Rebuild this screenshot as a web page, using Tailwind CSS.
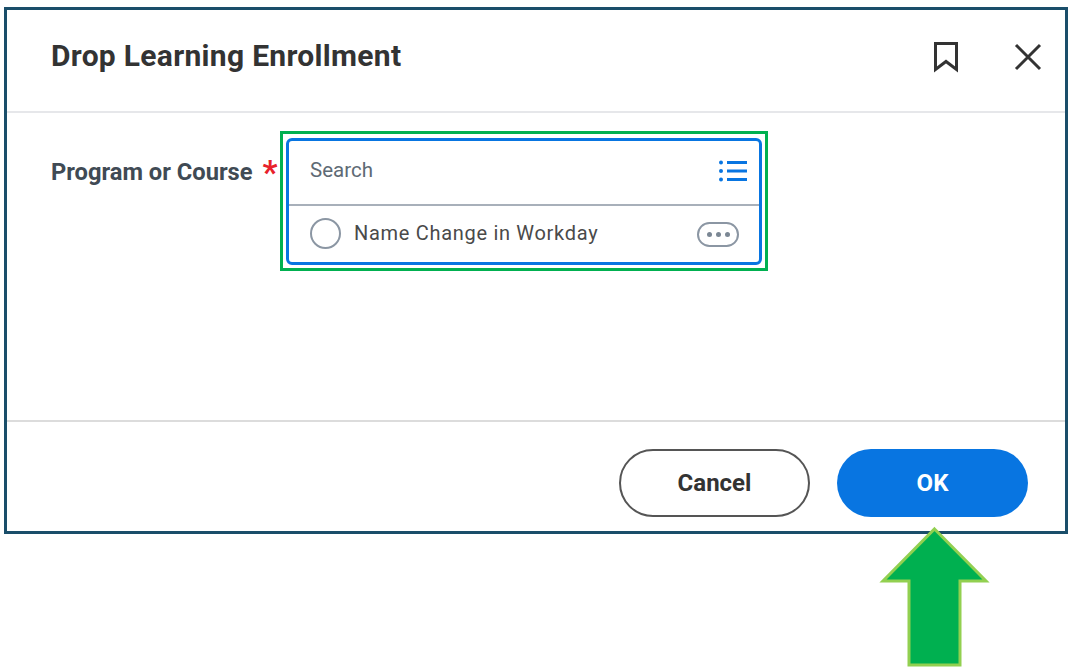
<!DOCTYPE html>
<html lang="en">
<head>
  <meta charset="UTF-8">
  <title>Drop Learning Enrollment</title>
  <script src="https://cdn.jsdelivr.net/npm/@tailwindcss/browser@4"></script>
</head>
<body class="bg-white font-['Roboto',sans-serif]">
  <div class="relative w-[1071px] h-[670px] overflow-hidden pt-[7px] pl-[4px]">
    <!-- Dialog -->
    <div class="w-[1064px] h-[527px] border-[3px] border-[#1a4e6a] flex flex-col bg-white">
      <div class="h-[103px] shrink-0 border-b-2 border-[#e6e7ea] flex items-center pl-[44px] pr-[23px]">
        <h1 class="text-[30px] font-bold text-[#333333] tracking-[0.3px] flex-1 -mt-[10px]">Drop Learning Enrollment</h1>
        <svg class="w-[26px] h-[32px] mr-[55px] -mt-[8px]" viewBox="0 0 26 32" fill="none" stroke="#333333" stroke-width="3"><path d="M2.5 2.5H23.5V28.5L13 20.5L2.5 28.5Z"/></svg>
        <svg class="w-[28px] h-[28px] -mt-[8px]" viewBox="0 0 28 28" fill="none" stroke="#333333" stroke-width="3"><path d="M2 2L26 26M26 2L2 26"/></svg>
      </div>

      <div class="h-[309px] shrink-0 border-b-2 border-[#dcdcdc] flex items-start pl-[44px] pt-[18px]">
        <div class="w-[229px] pt-[25px] flex items-center text-[23.7px] font-bold text-[#404a54] leading-[30px]">
          <span>Program or Course</span>
          <span class="ml-[10px] text-[#e8212b] text-[33px] leading-[30px] mt-[2px]">*</span>
        </div>
        <div class="w-[488px] h-[140px] border-[3px] border-[#00b050] px-[3px] py-[4px]">
          <div class="h-[127px] border-[3px] border-[#0875e1] rounded-[6px] flex flex-col">
            <div class="h-[65px] border-b-2 border-[#a8b0ba] flex items-center pl-[21px] pr-[12px]">
              <span class="flex-1 text-[20.5px] text-[#5e6a75] -mt-[4px]">Search</span>
              <svg class="w-[28px] h-[22px] -mt-[4px]" viewBox="0 0 28 22" fill="#0875e1">
                <circle cx="2" cy="2.5" r="2"/><circle cx="2" cy="11" r="2"/><circle cx="2" cy="19.5" r="2"/>
                <rect x="8" y="1" width="20" height="3"/><rect x="8" y="9.5" width="20" height="3"/><rect x="8" y="18" width="20" height="3"/>
              </svg>
            </div>
            <div class="flex-1 flex items-center pl-[21px] pr-[20px] pb-[2px]">
              <span class="w-[31px] h-[31px] rounded-full border-2 border-[#8b96a3] shrink-0"></span>
              <span class="ml-[13px] flex-1 text-[20px] text-[#4a4a4a] tracking-[0.7px]">Name Change in Workday</span>
              <span class="w-[42px] h-[25px] mt-[2px] rounded-full border-2 border-[#8b96a3] flex items-center justify-center gap-[4px]">
                <span class="w-[5px] h-[5px] rounded-full bg-[#7b8794]"></span>
                <span class="w-[5px] h-[5px] rounded-full bg-[#7b8794]"></span>
                <span class="w-[5px] h-[5px] rounded-full bg-[#7b8794]"></span>
              </span>
            </div>
          </div>
        </div>
      </div>

      <div class="flex-1 flex justify-end items-start pt-[27px] pr-[37px] gap-[27px]">
        <button class="w-[191px] h-[68px] rounded-full border-2 border-[#555555] bg-white text-[24px] font-bold text-[#333333]">Cancel</button>
        <button class="w-[191px] h-[68px] rounded-full bg-[#0875e1] text-[24px] font-bold text-white">OK</button>
      </div>
    </div>

    <!-- Arrow callout -->
    <svg class="absolute left-[878px] top-[526px] w-[114px] h-[142px]" viewBox="0 0 114 142">
      <path d="M56.5 3L108 55H82V139H31V55H5Z" fill="#00b050" stroke="#92d050" stroke-width="3"/>
    </svg>
  </div>
</body>
</html>
